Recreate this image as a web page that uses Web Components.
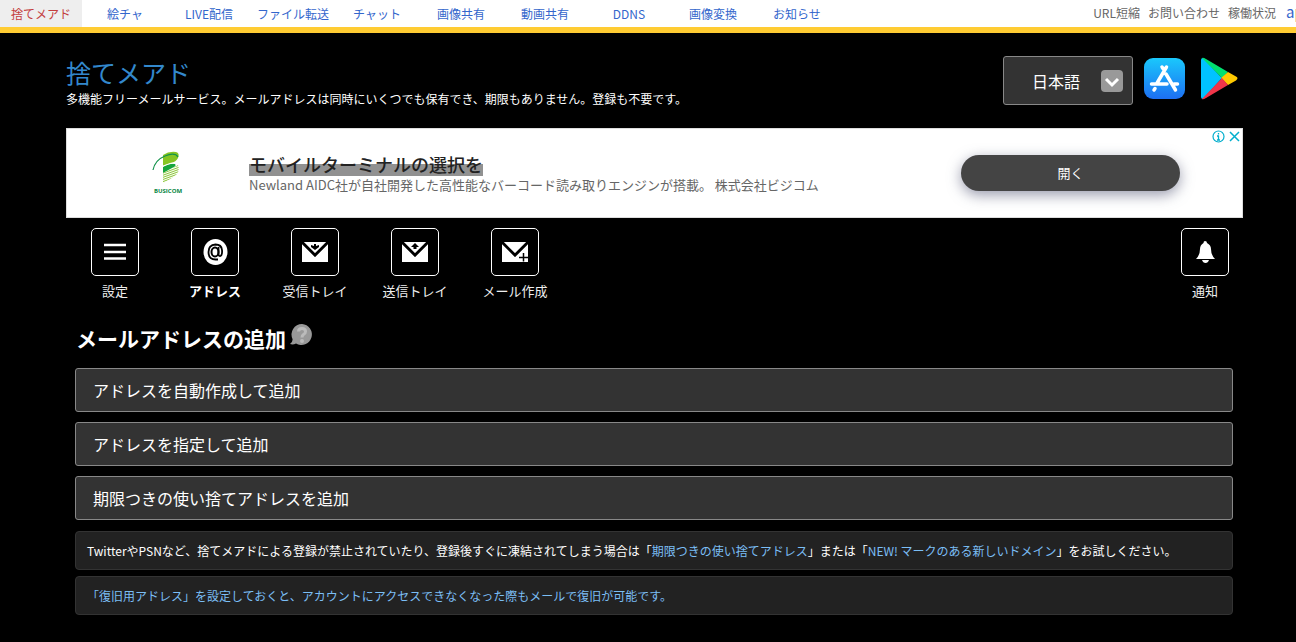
<!DOCTYPE html>
<html lang="ja">
<head>
<meta charset="utf-8">
<meta name="viewport" content="width=device-width, initial-scale=1">
<title>捨てメアド</title>
<style>
    body {
        margin: 0;
        background: #000;
        color: #fff;
        font-family: "Noto Sans CJK JP", sans-serif;
        font-size: 12px;
    }
</style>
</head>
<body>

<site-nav>
    <nav-link active>捨てメアド</nav-link>
    <nav-link>絵チャ</nav-link>
    <nav-link>LIVE配信</nav-link>
    <nav-link>ファイル転送</nav-link>
    <nav-link>チャット</nav-link>
    <nav-link>画像共有</nav-link>
    <nav-link>動画共有</nav-link>
    <nav-link>DDNS</nav-link>
    <nav-link>画像変換</nav-link>
    <nav-link>お知らせ</nav-link>
    <nav-link slot="side" small>URL短縮</nav-link>
    <nav-link slot="side" small>お問い合わせ</nav-link>
    <nav-link slot="side" small>稼働状況</nav-link>
</site-nav>

<page-header>
    捨てメアド
    <span slot="tagline">多機能フリーメールサービス。メールアドレスは同時にいくつでも保有でき、期限もありません。登録も不要です。</span>
</page-header>

<ad-banner>
    モバイルターミナルの選択を
    <span slot="text">Newland AIDC社が自社開発した高性能なバーコード読み取りエンジンが搭載。 株式会社ビジコム</span>
    <span slot="action">開く</span>
</ad-banner>

<tool-bar>
    <tool-button icon="menu">設定</tool-button>
    <tool-button icon="at" active>アドレス</tool-button>
    <tool-button icon="inbox">受信トレイ</tool-button>
    <tool-button icon="outbox">送信トレイ</tool-button>
    <tool-button icon="compose">メール作成</tool-button>
    <tool-button icon="bell" slot="end">通知</tool-button>
</tool-bar>

<address-panel>
    <span slot="title">メールアドレスの追加</span>
    <action-button>アドレスを自動作成して追加</action-button>
    <action-button>アドレスを指定して追加</action-button>
    <action-button>期限つきの使い捨てアドレスを追加</action-button>
    <note-box slot="notes">TwitterやPSNなど、捨てメアドによる登録が禁止されていたり、登録後すぐに凍結されてしまう場合は「<text-link>期限つきの使い捨てアドレス</text-link>」または「<text-link>NEW! マークのある新しいドメイン</text-link>」をお試しください。</note-box>
    <note-box slot="notes"><text-link>「復旧用アドレス」を設定しておくと、アカウントにアクセスできなくなった際もメールで復旧が可能です。</text-link></note-box>
</address-panel>

<script>
// attaches an open shadow root filled from an html string
class BaseElement extends HTMLElement {
    constructor() {
        super();
        const template = document.createElement('template');
        template.innerHTML = this.constructor.html;
        this.attachShadow({mode: 'open'});
        this.shadowRoot.appendChild(template.content.cloneNode(true));
    }
}

class SiteNav extends BaseElement {
    static html = `
<style>
    :host { display: block; }
    nav {
        display: flex;
        height: 27px;
        overflow: hidden;
        background: #fff;
        border-bottom: 6px solid #fc3;
    }
    .main { display: flex; gap: 2px; }
    .side { display: flex; gap: 8px; margin-left: auto; }
    .apps {
        width: 10px;
        margin-left: 2px;
        overflow: hidden;
        color: #36c;
        font-size: 15px;
        line-height: 24px;
        text-decoration: none;
        white-space: nowrap;
    }
    .apps span { color: #e63; }
</style>
<nav>
    <div class="main"><slot></slot></div>
    <div class="side"><slot name="side"></slot><a class="apps" href="#">a<span>p</span></a></div>
</nav>`;
}

class NavLink extends BaseElement {
    static html = `
<style>
    :host { display: block; width: 82px; }
    a {
        display: block;
        color: #36c;
        line-height: 28px;
        text-align: center;
        text-decoration: none;
        white-space: nowrap;
    }
    :host([active]) { background: #eee; }
    :host([active]) a { color: #c33d3d; }
    :host([small]) { width: auto; }
    :host([small]) a { color: #666; line-height: 26px; }
</style>
<a href="#"><slot></slot></a>`;
}

class PageHeader extends BaseElement {
    static html = `
<style>
    :host {
        display: flex;
        align-items: flex-start;
        padding: 23px 57px 0 66px;
    }
    .brand { flex: 1; }
    h1 { margin: 0; font-size: 25px; font-weight: 400; line-height: 32px; }
    h1 a { color: #38c; text-decoration: none; }
    p { margin: 2px 0 0; line-height: 18px; }
    .lang { display: grid; align-items: center; width: 130px; margin-right: 10px; }
    .lang > * { grid-area: 1 / 1; }
    select {
        appearance: none;
        box-sizing: border-box;
        width: 100%;
        height: 49px;
        padding: 0 28px;
        border: 1px solid #888;
        border-radius: 3px;
        background: #333;
        color: #fff;
        font: inherit;
        font-size: 16px;
    }
    .lang svg { justify-self: end; margin-right: 10px; pointer-events: none; }
    .store { display: block; height: 44px; }
    .store + .store { margin-left: 12px; }
    svg { display: block; }
</style>
<div class="brand">
    <h1><a href="#"><slot></slot></a></h1>
    <p><slot name="tagline"></slot></p>
</div>
<div class="lang">
    <select aria-label="言語"><option>日本語</option></select>
    <svg width="22" height="22" viewBox="0 0 22 22">
        <rect width="22" height="22" rx="4" fill="#999"/>
        <path d="M5 9l6 6 6-6" fill="none" stroke="#fff" stroke-width="3"/>
    </svg>
</div>
<a class="store" href="#" aria-label="App Store">
    <svg width="43" height="44" viewBox="0 0 43 44">
        <defs><linearGradient id="sky" x1="0" y1="0" x2="0" y2="1">
            <stop offset="0" stop-color="#1ac8fc"/><stop offset="1" stop-color="#1d6ff2"/>
        </linearGradient></defs>
        <rect x="1" y="2" width="41" height="41" rx="9" fill="url(#sky)"/>
        <g fill="none" stroke="#fff" stroke-width="3.500" stroke-linecap="round">
            <path d="M23.500 11L13.500 28M19 11L21 14M23 18L32.500 34M8.500 28H24M31 28H34.500M12 32.500L11 34"/>
        </g>
    </svg>
</a>
<a class="store" href="#" aria-label="Google Play">
    <svg width="41" height="44" viewBox="0 0 41 44">
        <path d="M3 4Q3 2 5 2L24 22 5 43Q3 43 3 41z" fill="#00c3ff"/>
        <path d="M4 2Q5 1 8 3L30 16 24 22z" fill="#00e070"/>
        <path d="M30 16L38 20.500Q41 22 38 24.500L30 29 23 22z" fill="#ffc900"/>
        <path d="M4 43Q5 44 8 42L30 29 24 22z" fill="#f03549"/>
    </svg>
</a>`;
}

class AdBanner extends BaseElement {
    static html = `
<style>
    :host {
        display: flex;
        align-items: center;
        position: relative;
        box-sizing: border-box;
        height: 90px;
        margin: 20px 53px 0 66px;
        padding: 0 62px 0 85px;
        border: 1px solid #ddd;
        background: #fff;
    }
    .logo { width: 36px; margin-right: 61px; }
    .logo svg { display: block; }
    .logo text { font: bold 6px "Open Sans", sans-serif; }
    .copy { flex: 1; }
    h2 {
        width: fit-content;
        margin: 0;
        background: linear-gradient(transparent 50%, #919191 50%);
        color: #222;
        font-size: 18px;
        font-weight: 500;
        line-height: 24px;
    }
    p { margin: 0; color: #666; font-size: 13px; line-height: 18px; }
    button {
        width: 219px;
        height: 36px;
        padding: 0 0 2px;
        border: 0;
        border-radius: 18px;
        background: #444;
        box-shadow: 0 4px 14px #55587799;
        color: #fff;
        font: inherit;
        font-size: 13px;
    }
    .marks { display: flex; gap: 3px; position: absolute; top: 1px; right: 1px; }
</style>
<div class="logo">
    <svg width="36" height="44" viewBox="0 0 36 44">
        <defs><pattern id="stripes" width="3" height="2" patternUnits="userSpaceOnUse" patternTransform="rotate(-20)">
            <rect width="3" height="1" fill="#8cc63a"/>
        </pattern></defs>
        <path d="M11 4Q17 0 24 1Q28 2 26 7Q24 11 19 12L11 15z" fill="#86c523"/>
        <path d="M11 16Q17 12 23 13Q25 15 20 17L11 22z" fill="#16a53c"/>
        <path d="M11 22L21 17Q24 15 26 14Q28 20 24 24Q19 28 11 32z" fill="url(#stripes)"/>
        <path d="M1 19Q3 9 13 5Q23 1 26 6" fill="none" stroke="#12924a" stroke-width="1.200"/>
        <path d="M11 15Q19 11 26 12" fill="none" stroke="#fff"/>
        <text x="2" y="42" fill="#07853f">BUSICOM</text>
    </svg>
</div>
<div class="copy">
    <h2><slot></slot></h2>
    <p><slot name="text"></slot></p>
</div>
<button type="button"><slot name="action"></slot></button>
<div class="marks">
    <svg width="13" height="13" viewBox="0 0 13 13" fill="none" stroke="#00aecd">
        <circle cx="6.500" cy="6.500" r="5.500" stroke-width="1.200"/>
        <path d="M6.500 5.500V10M6.500 3V4.500M5 6H7M5 10H8" stroke-width="1.300"/>
    </svg>
    <svg width="13" height="13" viewBox="0 0 13 13" fill="none" stroke="#00aecd" stroke-width="1.500">
        <path d="M2 2L11 11M11 2L2 11"/>
    </svg>
</div>`;
}

class ToolBar extends BaseElement {
    static html = `
<style>
    :host { display: flex; padding: 10px 41px 0 65px; }
    .items { display: flex; flex: 1; }
</style>
<div class="items"><slot></slot></div>
<slot name="end"></slot>`;
}

const envelope = `
    <path d="M11 14H37L24 27z" fill="#fff"/>
    <path d="M11 16L24 29 37 16V34H11z" fill="#fff"/>
    <path d="M11 14L24 27 37 14" fill="none" stroke="#000" stroke-width="2.500"/>`;

const icons = {
    menu: '<path d="M13 17H35M13 24H35M13 30.500H35" stroke="#fff" stroke-width="2.500"/>',
    at: `
    <ellipse cx="24.500" cy="24" rx="12" ry="13" fill="#fff"/>
    <ellipse cx="24" cy="24" rx="3.500" ry="4.500" fill="none" stroke="#000" stroke-width="2"/>
    <path d="M27.500 19V26.500Q28 28.500 29.500 28Q31.500 27 31 22Q30.500 16.500 24.500 16.500Q17.500 17 17.500 24Q17.500 31.500 24.500 31.500H27" fill="none" stroke="#000" stroke-width="1.800"/>`,
    inbox: envelope + '<path d="M23 16H25V18L28 17V19L24 22 20 19V17L23 18z"/>',
    outbox: envelope + '<path d="M24 15L28 19H25.500V21H22.500V19H20z"/>',
    compose: envelope + '<path d="M32.500 25V33.500M28 29.500H37" stroke="#000" stroke-width="1.500"/>',
    bell: `
    <path d="M24 13Q26 13 26 15Q30 17 30 21Q30 27 34 31H15Q19 27 19 21Q19 17 22.500 15Q22.500 13 24 13z" fill="#fff"/>
    <path d="M21 32H28Q27 35 24.500 35Q22 35 21 32z" fill="#fff"/>`
};

class ToolButton extends BaseElement {
    static html = `
<style>
    :host { display: block; width: 100px; }
    button {
        display: flex;
        flex-direction: column;
        align-items: center;
        gap: 5px;
        width: 100%;
        padding: 0;
        border: 0;
        background: none;
        color: #eee;
        font: inherit;
        font-size: 13px;
        line-height: 20px;
        cursor: pointer;
    }
    :host([active]) button { color: #fff; font-weight: 700; }
    .box {
        display: block;
        box-sizing: border-box;
        width: 48px;
        height: 48px;
        border: 1px solid #fff;
        border-radius: 5px;
    }
    svg { display: block; margin: -1px; }
</style>
<button type="button">
    <span class="box"><svg width="48" height="48" viewBox="0 0 48 48"></svg></span>
    <span><slot></slot></span>
</button>`;

    connectedCallback() {
        this.shadowRoot.querySelector('svg').innerHTML = icons[this.getAttribute('icon')];
    }
}

class AddressPanel extends BaseElement {
    static html = `
<style>
    :host { display: block; padding: 22px 63px 27px 75px; }
    header { display: flex; gap: 3px; padding-left: 1px; }
    h2 { margin: 0; font-size: 21px; font-weight: 700; line-height: 30px; }
    .help { width: 24px; height: 24px; padding: 0; border: 0; background: none; }
    .help svg { display: block; }
    .actions { display: flex; flex-direction: column; gap: 10px; margin-top: 15px; }
    .notes { display: flex; flex-direction: column; gap: 6px; margin-top: 11px; }
</style>
<header>
    <h2><slot name="title"></slot></h2>
    <button class="help" type="button" aria-label="ヘルプ">
        <svg width="24" height="24" viewBox="0 0 24 24">
            <path d="M13 1A10.500 10.500 0 1 1 7 20.500Q4 22 1 21Q4 19 3.500 16A10.500 10.500 0 0 1 13 1z" fill="#999"/>
            <path d="M9.500 8.500Q9.500 5.500 13 5.500Q16.500 5.500 16.500 8.500Q16.500 10.500 14.500 11.500Q13 12.500 13 14.500" fill="none" stroke="#bbb" stroke-width="3"/>
            <circle cx="13" cy="18" r="2" fill="#bbb"/>
        </svg>
    </button>
</header>
<div class="actions"><slot></slot></div>
<div class="notes"><slot name="notes"></slot></div>`;
}

class ActionButton extends BaseElement {
    static html = `
<style>
    :host { display: block; }
    button {
        display: block;
        width: 100%;
        padding: 9px 17px;
        border: 1px solid #888;
        border-radius: 3px;
        background: #333;
        color: #fff;
        font: inherit;
        font-size: 16px;
        line-height: 24px;
        text-align: left;
        cursor: pointer;
    }
</style>
<button type="button"><slot></slot></button>`;
}

class NoteBox extends BaseElement {
    static html = `
<style>
    :host {
        display: block;
        padding: 10px 11px 9px;
        border: 1px solid #333;
        border-radius: 4px;
        background: #222;
        line-height: 18px;
    }
</style>
<slot></slot>`;
}

// inline element: no whitespace around the link, it would show up in the sentence
class TextLink extends BaseElement {
    static html = `<style>
    :host { display: inline; }
    a { color: #7bbef5; text-decoration: none; }
</style><a href="#"><slot></slot></a>`;
}

customElements.define('site-nav', SiteNav);
customElements.define('nav-link', NavLink);
customElements.define('page-header', PageHeader);
customElements.define('ad-banner', AdBanner);
customElements.define('tool-bar', ToolBar);
customElements.define('tool-button', ToolButton);
customElements.define('address-panel', AddressPanel);
customElements.define('action-button', ActionButton);
customElements.define('note-box', NoteBox);
customElements.define('text-link', TextLink);
</script>
</body>
</html>
